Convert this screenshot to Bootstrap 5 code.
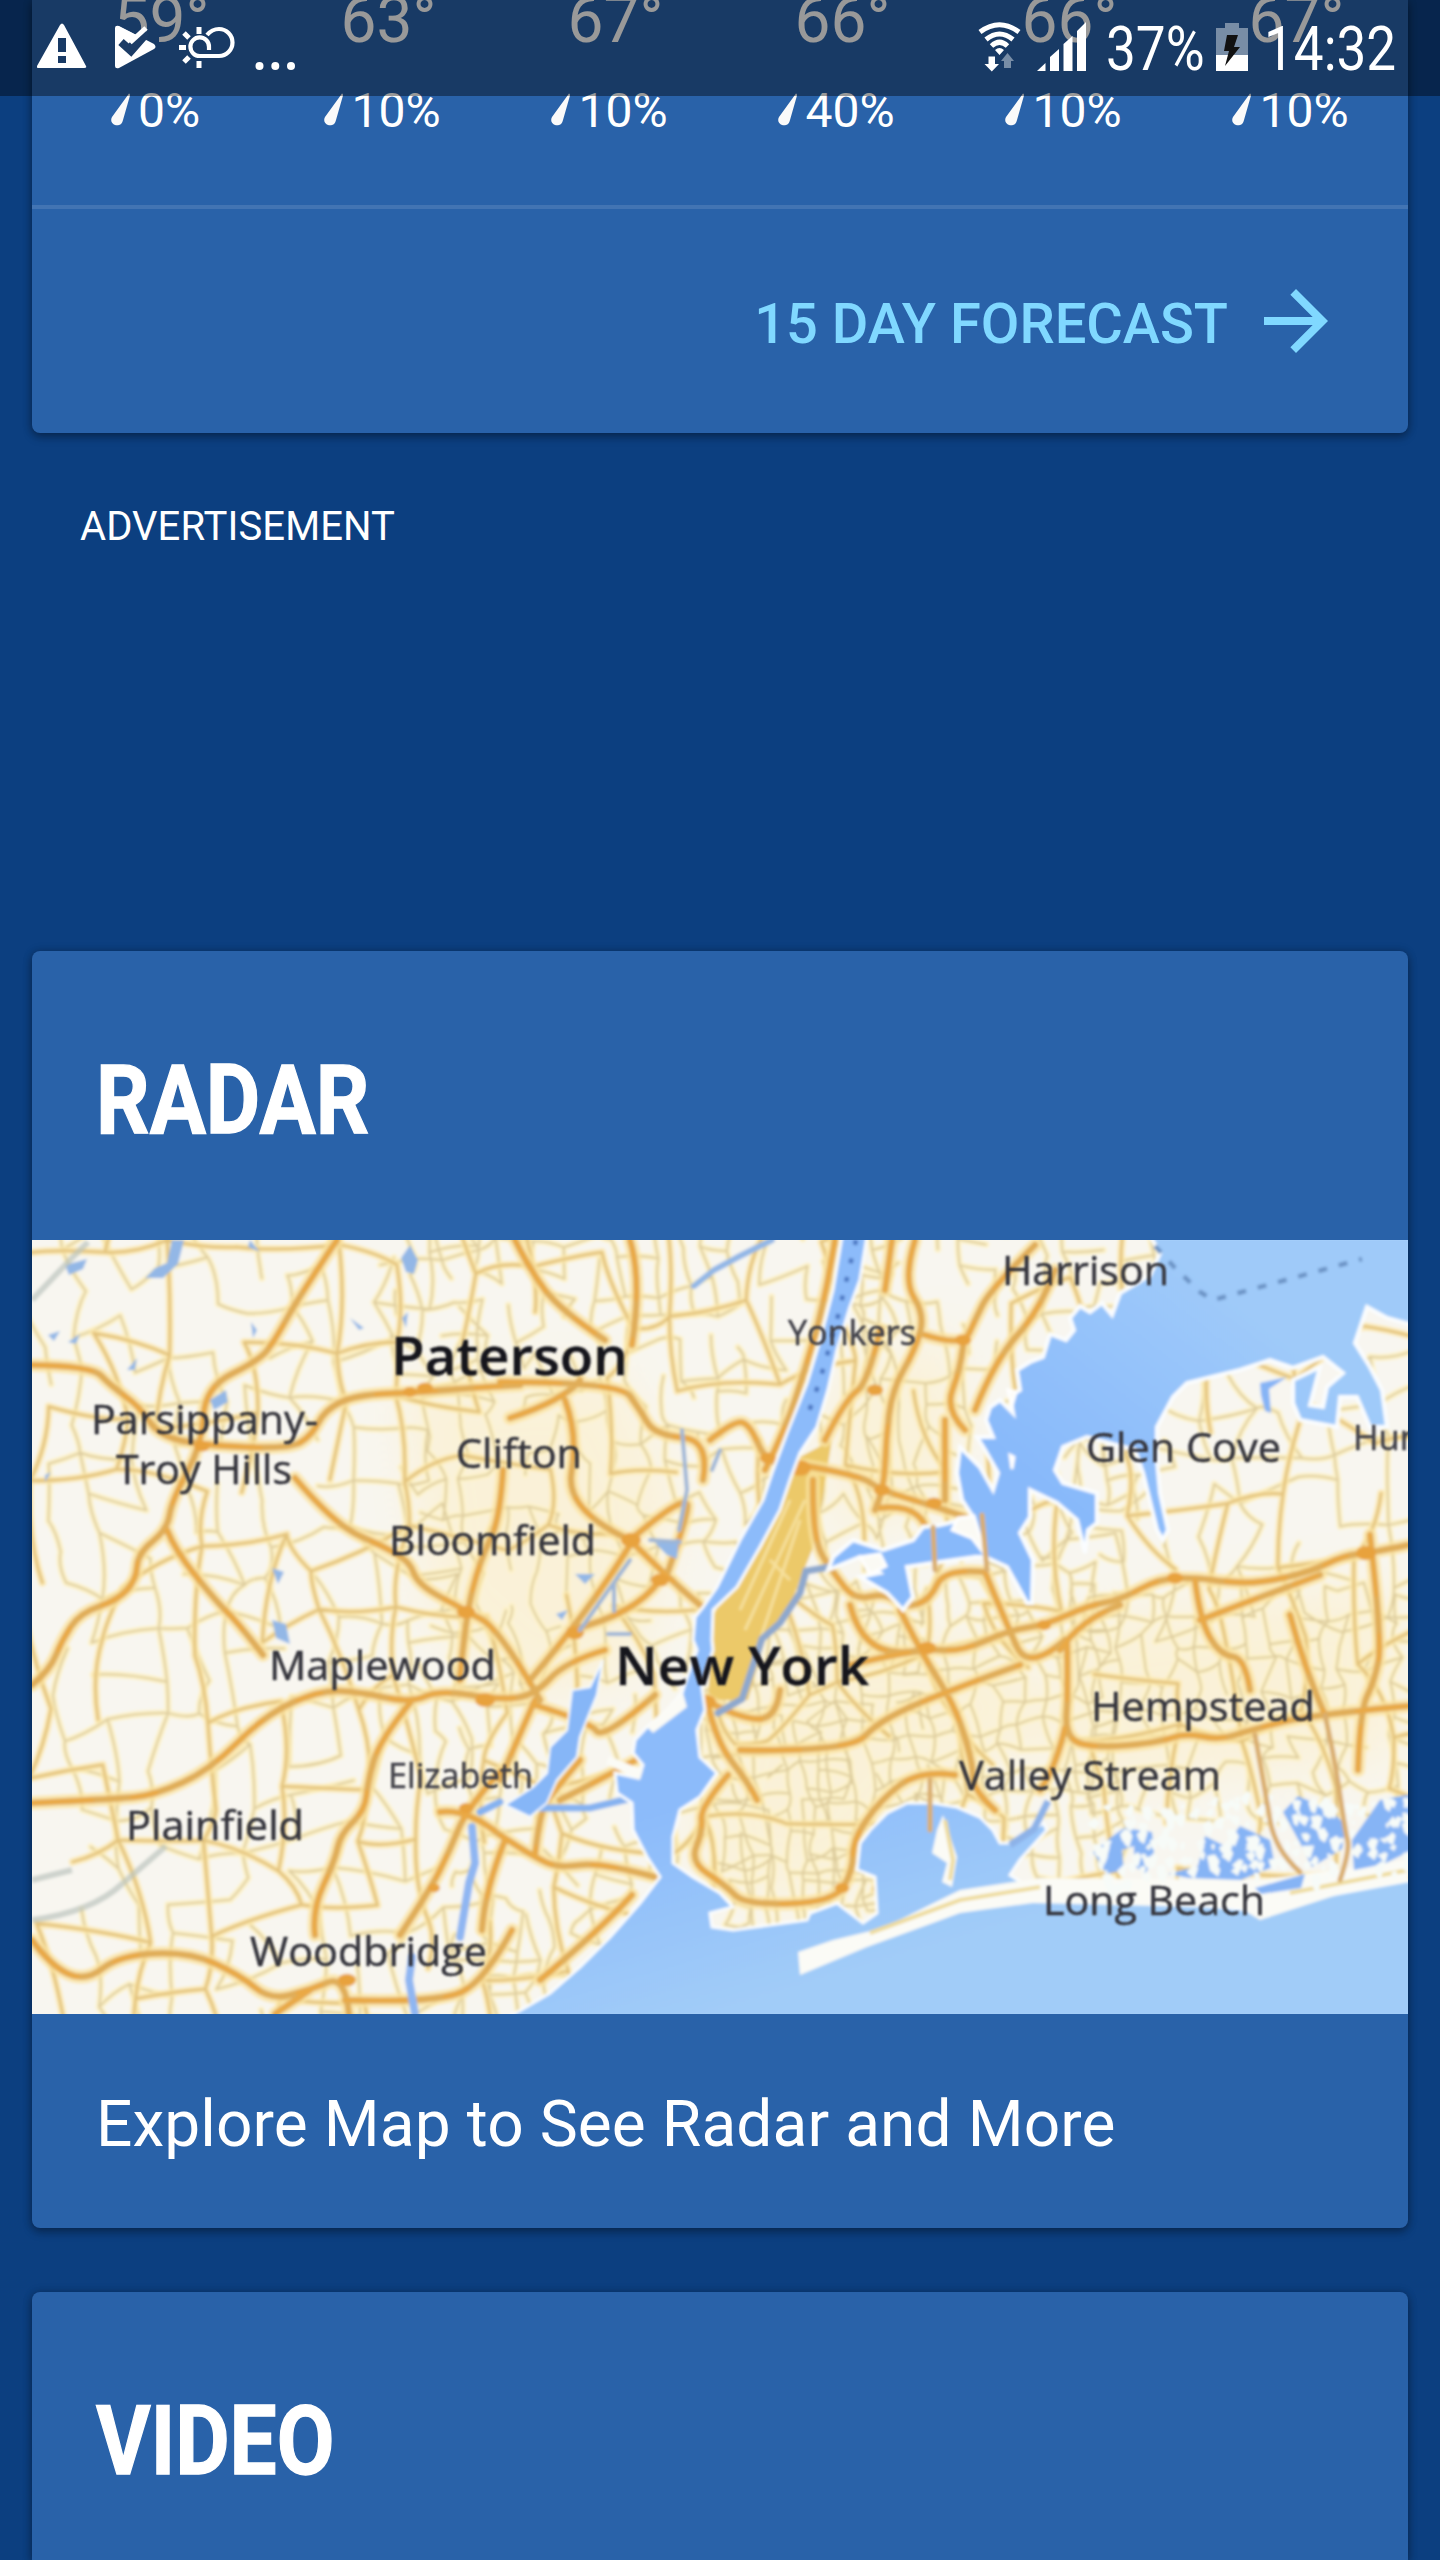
<!DOCTYPE html>
<html lang="en">
<head>
<meta charset="utf-8">
<meta name="viewport" content="width=device-width, initial-scale=1">
<title>Weather</title>
<link href="https://cdn.jsdelivr.net/npm/bootstrap@5.3.0/dist/css/bootstrap.min.css" rel="stylesheet">
<style>
  body { background: #0c3f80; color: #fff; font-family: Roboto, sans-serif; height: 2560px; overflow: hidden; }
  .panel { --bs-card-bg: #2962a9; --bs-card-color: #fff; background: #2962a9; color: #fff; border-radius: 8px; box-shadow: 0 4px 10px rgba(0,0,0,.32), 0 0 10px rgba(0,0,0,.2); }
  .screen { padding: 0 32px; }
  .statusbar { height: 96px; background: rgba(0,0,0,.4); z-index: 10; padding: 0 32px 0 37px; }
  .statusbar svg { display: block; flex: none; }
  .condensed { display: inline-block; transform-origin: 0 50%; white-space: nowrap; }
  .status-text { font-size: 61px; line-height: 64px; height: 64px; margin-top: 17px; transform: scaleX(.87); }
  .pct-box { width: 110px; margin-left: 18px; }
  .clock-box { width: 144px; margin-left: 12px; }
  .days { padding-left: 16px; height: 205px; }
  .day { width: 227px; flex: none; }
  .temp { font-size: 64px; line-height: 42px; height: 40px; }
  .precip { font-size: 48px; line-height: 56px; margin-top: 43px; padding-right: 12px; }
  .rule { height: 4px; background: #4274b3; }
  .forecast { height: 224px; padding-right: 64px; color: #80d8ff; font-size: 56px; line-height: 64px; font-weight: 500; text-decoration: none; }
  .forecast .label { padding-top: 6px; margin-right: 20px; }
  .advert { height: 518px; padding: 70px 0 0 48px; font-size: 40px; line-height: 48px; letter-spacing: .08px; }
  .panel-head { height: 289px; padding: 8px 0 0 64px; }
  .panel-head h2 { font-size: 96px; line-height: 112px; font-weight: 700; transform: scaleX(.872); -webkit-text-stroke: 1.300px #fff; }
  .explore { height: 214px; padding: 8px 0 0 64px; font-size: 64px; line-height: 76px; letter-spacing: .1px; }
  .video { height: 268px; margin-top: 64px; border-bottom-left-radius: 0; border-bottom-right-radius: 0; }
  .map { display: block; width: 1376px; height: 774px; }
  .map text { font-family: "Open Sans", "Noto Sans", sans-serif; font-size: 41px; fill: #35353c; stroke: #35353c; stroke-width: .5px; }
  .map .halo text { stroke: #fffaf0; fill: #fffaf0; stroke-opacity: .6; stroke-width: 6px; stroke-linejoin: round; }
  .map text.city { font-size: 53px; font-weight: 600; fill: #15151a; }
  .map text.town { font-size: 34px; fill: #45454d; }
</style>
<script src="https://cdn.jsdelivr.net/npm/bootstrap@5.3.0/dist/js/bootstrap.bundle.min.js"></script>
</head>
<body>
<header class="statusbar position-absolute top-0 start-0 w-100 d-flex align-items-start">
  <svg width="50" height="96" viewBox="37 0 50 96"><path fill="#fff" fill-rule="evenodd" d="M60 25q2-3 4 0l22 41q1 2-2 2H39q-3 0-2-2zM58 38v14h8V38zM58 56v7h8v-7z"/></svg>
  <svg width="92" height="96" viewBox="87 0 92 96"><path fill="#fff" d="M115 28q0-3 4-2l35 18q3 3 0 5l-35 19q-4 1-4-2z"/><path d="M121 42l10 9 14-16" fill="none" stroke="#1c3c66" stroke-width="8"/><path d="M131 47l9-10 7-5" fill="none" stroke="#1c3c66" stroke-width="8"/><path d="M130 42.500L146 28" fill="none" stroke="#fff" stroke-width="5"/><path fill="#fff" d="M119 26.500l17 8.500-5 6-7-7-5 3z"/></svg>
  <svg width="56" height="96" viewBox="179 0 56 96"><g fill="none" stroke="#fff" stroke-width="4.200"><path d="M207 35q5-6 12-6a13.500 13.500 0 0 1 0 27h-19a9.300 9.300 0 1 1 9-9v3"/><path stroke-width="5" d="M199 27v7M179 47.500h7M199 61v7M184 33l5 5M184 62l5-5"/></g></svg>
  <svg width="66" height="96" viewBox="235 0 66 96"><g fill="#fff"><circle cx="259.500" cy="66" r="4"/><circle cx="275.300" cy="66" r="4"/><circle cx="291" cy="66" r="4"/></g></svg>
  <svg class="ms-auto" width="46" height="96" viewBox="977 0 46 96"><g fill="none" stroke="#fff" stroke-width="5"><path d="M980 32Q999.500 17.500 1019 32"/><path d="M986 39.500Q999.500 28.500 1013 39.500"/><path d="M991.500 46Q999.500 38.500 1007.500 46"/></g><path fill="#fff" d="M995 50q4.500-4 9 0l-4.500 5zM988.500 56.500h6.500v7.500h4l-7.200 7.500-7.300-7.500h4z"/><path fill="#788da6" d="M1007.500 53l6.500 8h-3v7h-7v-7h-3z"/></svg>
  <svg width="65" height="96" viewBox="1023 0 65 96"><path fill="#fff" d="M1037 71l8.500-8v8zM1050 71V57l9-8v22zM1063.500 71V44l9-8v35zM1077 71V31l9-9v49z"/></svg>
  <div class="pct-box"><span class="condensed status-text">37%</span></div>
  <svg width="36" height="96" viewBox="1216 0 36 96"><path fill="#788da6" d="M1216 28h9v-5h14v5h9v27h-32z"/><path fill="#fff" d="M1216 55h32v16h-32z"/><path fill="#111" d="M1227 35h11l-4 12h6l-15 19 4-15h-5z"/></svg>
  <div class="clock-box"><span class="condensed status-text">14:32</span></div>
</header>

<main class="screen">
  <section class="card panel border-0 rounded-top-0">
    <div class="days d-flex" id="days"></div>
    <div class="rule"></div>
    <a class="forecast d-flex align-items-center justify-content-end" href="#"><span class="label">15 DAY FORECAST</span>
      <svg width="96" height="96" viewBox="0 0 24 24" fill="currentColor"><path d="M12 4l-1.410 1.410L16.170 11H4v2h12.170l-5.580 5.590L12 20l8-8z"/></svg></a>
  </section>
  <div class="advert">ADVERTISEMENT</div>
  <section class="card panel border-0">
    <div class="panel-head d-flex align-items-center"><h2 class="condensed m-0">RADAR</h2></div>
    <svg class="map" viewBox="32 1240 1376 774">
      <defs>
        <filter id="soft" x="0" y="0" width="100%" height="100%"><feGaussianBlur stdDeviation="1.500"/></filter>
        <filter id="softText" x="-5%" y="-5%" width="110%" height="110%"><feGaussianBlur stdDeviation=".9"/></filter>
        <filter id="glow" x="-20%" y="-20%" width="140%" height="140%"><feGaussianBlur stdDeviation="26"/></filter>
        <linearGradient id="sea" gradientUnits="userSpaceOnUse" x1="700" y1="1800" x2="760" y2="2000"><stop offset="0" stop-color="#8cbbfa"/><stop offset="1" stop-color="#a1ccf8"/></linearGradient>
        <linearGradient id="sound" gradientUnits="userSpaceOnUse" x1="1040" y1="1480" x2="1200" y2="1270"><stop offset="0" stop-color="#88b9fa"/><stop offset="1" stop-color="#9fcaf9"/></linearGradient>
      </defs>
      <g filter="url(#soft)">
        <rect x="20" y="1230" width="1400" height="800" fill="#f8f6f0"/>
        <g fill="#fdebb5" opacity=".4" filter="url(#glow)">
          <path d="M400 1380L620 1370 680 1500 640 1680 520 1700 430 1620zM720 1690L860 1620 1000 1640 1090 1740 950 1780 850 1900 730 1900 690 1850zM830 1380L960 1330 950 1500 830 1540zM1060 1620L1400 1580V1760L1080 1790z"/>
        </g>
        <g id="minor" fill="none" stroke-linecap="round"></g>
        <path fill="#ecc969" d="M798 1458L832 1440 822 1500 812 1550 792 1600 765 1640 748 1700 708 1700 713 1615 762 1547z"/>
        <path d="M790 1500l-50 110M805 1500l-60 130M770 1560l20 20M800 1520l-50 150" stroke="#f6e09c" stroke-width="3" fill="none"/>
        <g id="major" fill="none" stroke-linejoin="round" stroke-linecap="round"></g>
        <!-- lakes and creeks -->
        <g fill="#93b7e6">
          <path d="M172 1240h12l-6 24-15 14-18 0 10-10 12-5zM65 1265l22-6-4 10-14 6zM410 1245l8 15-4 14-8-2-5-14zM250 1240l10 12-12-5zM48 1335l12-4-6 10zM68 1342l12-8-4 10zM127 1370l10-12-2 12zM210 1400l16-10 2 12-14 8zM251 1322l6 8-4 8zM402 1318l6-6-2 16zM350 1318l14 10-5 2zM272 1568l12 4-6 12zM272 1620l14 4 4 20-14-6zM45 1475l6-3-6 10zM655 1543l24-4-2 20-10-4zM575 1574h20l-10 10zM556 1614l12-4-6 10z"/>
        </g>
        <path fill="none" stroke="#bcc4bd" stroke-width="6" opacity=".7" d="M32 1300l36-38 20-20M32 1920q60-8 90-36l44-38M32 1880l40-10"/>
        <g fill="none" stroke-linecap="round">
          <path stroke="#93b7e6" stroke-width="6" d="M694 1286l20-16 26-14 20-10 12-6"/>
          <path stroke="#9db5d6" stroke-width="4" d="M682 1430l5 60-8 40M720 1450l-8 20M630 1560l-50 70M614 1585v26M608 1634h22M650 1540l30 2"/>
          <path stroke="#8fb6f2" stroke-width="8" d="M472 1827l3 36-6 20-9 54M412 1957l-3 23 6 34"/>
          <path stroke="#86b2f0" stroke-width="7" d="M480 1812l20-10M540 1808l50 0 38-9"/>
          <path stroke="#8ea8cd" stroke-width="7" d="M830 1567l-24 4-6 22-20 30-18 16-20 60-24 14"/>
        </g>
        <!-- harbour, bays and the ocean -->
        <path fill="url(#sea)" stroke="#fafdff" stroke-width="3" d="M842 1236L833 1290 820 1340 807 1383 787 1433 772 1473 763 1500 740 1540 717 1587 703 1607 695 1617 693 1640 697 1650 685 1683 682 1693 667 1710 647 1727 635 1740 633 1753 643 1765 638 1778 615 1773 617 1793 632 1803 633 1830 647 1857 660 1877 640 1903 610 1937 580 1967 550 1993 507 2018H1412V1880L1250 1910 1033 1890 1010 1875 1020 1860 1047 1830 1043 1823 1013 1843 1000 1843 993 1830 980 1817 957 1807 933 1803 907 1803 887 1813 870 1830 860 1843 857 1870 875 1877 877 1913 863 1923 837 1903 810 1913 807 1920 733 1930 712 1927 710 1913 733 1907 720 1893 693 1877 673 1863 673 1837 680 1810 700 1797 717 1773 700 1757 697 1730 705 1710 702 1687 713 1650 712 1640 713 1610 737 1587 760 1547 780 1510 790 1480 800 1453 817 1427 828 1390 837 1350 850 1307 860 1280 867 1236z"/>
        <path fill="#86b6f7" stroke="#f6fbff" stroke-width="2" d="M572 1690L590 1687 603 1660 597 1695 588 1717 580 1737 577 1757 557 1780 547 1803 530 1817 505 1805 533 1787 547 1773 550 1747 567 1730z"/>
        <path fill="#fbfbf6" d="M609 1756l34 14-3 10-34-16zM647 1727l36-34 4 14-34 26zM798 1952L833 1940 883 1928 960 1890 1040 1878 1260 1880 1408 1860V1882L1343 1893 1260 1920 1240 1908 1033 1903 960 1913 933 1923 867 1947 800 1975zM943 1815L957 1857 952 1887 942 1882 947 1863 932 1853 937 1830z"/>
        <path fill="none" stroke="#eedb9c" stroke-width="4" d="M870 1933L960 1900 1040 1887M1290 1893L1408 1870M945 1820l8 40-3 20"/>
        <path fill="url(#sound)" stroke="#fafdff" stroke-width="4" d="M1150 1236L1160 1253 1150 1275 1120 1293 1112 1315 1102 1303 1090 1312 1080 1306 1070 1318 1074 1330 1066 1340 1050 1334 1043 1357 1030 1362 1017 1370 1020 1390 1010 1396 1013 1413 1000 1400 990 1407 986 1420 993 1437 977 1437 985 1450 998 1473 993 1490 980 1467 960 1447 957 1473 962 1500 973 1517 940 1525 923 1527 913 1540 883 1550 853 1540 833 1557 828 1570 860 1557 880 1573 860 1577 887 1593 903 1610 913 1597 907 1567 933 1563 975 1557 985 1557 1007 1567 1027 1603 1032 1603 1033 1560 1020 1533 1030 1517 1030 1490 1057 1503 1077 1520 1085 1553 1088 1530 1097 1523 1097 1493 1063 1483 1055 1470 1063 1447 1087 1437 1135 1450 1143 1473 1157 1530 1163 1540 1168 1530 1160 1493 1157 1460 1157 1427 1173 1397 1187 1383 1240 1370 1270 1360 1293 1368 1323 1357 1343 1373 1327 1387 1323 1407 1310 1405 1320 1367 1293 1380 1293 1403 1300 1420 1337 1427 1340 1397 1357 1397 1370 1427 1387 1427 1382 1390 1370 1367 1355 1343 1367 1307 1387 1318 1412 1325V1236z"/>
        <path fill="#fbfaf4" stroke="#fff" stroke-width="3" d="M958 1518l16-2 12 40-14-18-20-8zM860 1557l20-3 6 12-16 8zM1008 1390l8 2-4 14zM1010 1455l4 2-2 12z"/>
        <path fill="#86b4f5" d="M1260 1383l27-6-18 12 2 24-6-2-4-16zM1093 1852l17-14 14-10 28 4 2 20-8 22-12-8 0-20-12 4 2 20-18 4zM1168 1874l30-8 7-30 20 10 15-20 30 14 5 26-34 14-52-2zM1283 1812l15-16 32 14 16 15-4 24-30 18-12-24zM1352 1840l14-20 14-20 32-6v56l-28 14-30 6zM1255 1888l50-14-4 14-40 6z"/>
        <path d="M1010 1845l24-16 14-28" stroke="#8db2e8" stroke-width="7" fill="none"/>
        <g id="marsh" fill="#f7fbf8"></g>
        <g id="bridges" fill="none" stroke-linejoin="round" stroke-linecap="round"></g>
        <g fill="none" stroke="#6b92c4" stroke-width="4.500">
          <path stroke-dasharray="9 12" d="M1155 1246L1175 1268 1200 1292 1213 1300 1362 1259"/>
          <path stroke="#4773c0" stroke-dasharray="5 14" d="M856 1240L837 1320 820 1380 806 1420"/>
        </g>
      </g>
      <g class="halo" filter="url(#softText)" id="halos" aria-hidden="true"></g>
      <g filter="url(#softText)" id="labels"></g>
    </svg>
    <div class="explore d-flex align-items-center">Explore Map to See Radar and More</div>
  </section>
  <section class="card panel border-0 video">
    <div class="panel-head d-flex align-items-center flex-shrink-0"><h2 class="condensed m-0">VIDEO</h2></div>
  </section>
</main>
<script>
const days = [['59°','0%'],['63°','10%'],['67°','10%'],['66°','40%'],['66°','10%'],['67°','10%']];
document.getElementById('days').innerHTML = days.map(([t, p]) => `
  <div class="day text-center"><div class="temp">${t}</div>
  <div class="precip d-flex justify-content-center align-items-start"><svg width="27" height="56" viewBox="0 0 27 56"><path fill="#fafafa" d="M18 10.500q1 0 1 2L12 37c-1 5-5 6-8 5s-5-4-3-8z"/></svg><span>${p}</span></div></div>`).join('');

// Local streets: an irregular mesh with a denser spacing near the city.
let seed = 11;
const rnd = () => (seed = (seed * 16807) % 2147483647) / 2147483647;
function mesh(x0, y0, x1, y1, step, keep, skew) {
  const pts = [], cols = Math.ceil((x1 - x0) / step) + 1, rows = Math.ceil((y1 - y0) / step) + 1;
  for (let r = 0; r < rows; r++) for (let c = 0; c < cols; c++)
    pts.push([x0 + c * step + (rnd() - .5) * step * .7 + skew * r, y0 + r * step + (rnd() - .5) * step * .7 - skew * c]);
  let d = '';
  const seg = (a, b) => {
    const mx = (a[0] + b[0]) / 2 + (rnd() - .5) * step * .3, my = (a[1] + b[1]) / 2 + (rnd() - .5) * step * .3;
    d += `M${a[0].toFixed(1)} ${a[1].toFixed(1)}Q${mx.toFixed(1)} ${my.toFixed(1)} ${b[0].toFixed(1)} ${b[1].toFixed(1)}`;
  };
  for (let r = 0; r < rows; r++) for (let c = 0; c < cols; c++) {
    const i = r * cols + c;
    if (c < cols - 1 && rnd() < keep) seg(pts[i], pts[i + 1]);
    if (r < rows - 1 && rnd() < keep + .2) seg(pts[i], pts[i + cols]);
  }
  return d;
}
const local = mesh(20, 1200, 420, 2040, 44, .5, 4) + mesh(380, 1200, 860, 2030, 29, .52, 3) +
  mesh(850, 1220, 1130, 1560, 27, .5, 2) + mesh(700, 1600, 1080, 1920, 22, .72, 2) +
  mesh(1070, 1590, 1420, 1800, 25, .65, 0) + mesh(1020, 1370, 1420, 1600, 44, .6, 2);
const streets = mesh(20, 1200, 1420, 2040, 74, .5, 4);
document.getElementById('minor').innerHTML =
  `<path d="${local}" stroke="#fdf2c9" stroke-width="7"/><path d="${local}" stroke="#dccb9b" stroke-width="2"/>
   <path d="${streets}" stroke="#fce9ac" stroke-width="8" opacity=".8"/><path d="${streets}" stroke="#e3c37c" stroke-width="3"/>`;

const roads = [
 'M32 1365L92 1366 110 1385 140 1407 158 1435 200 1445 290 1449 312 1435 325 1410 355 1395 420 1392 470 1388 520 1385',
 'M337 1240L300 1295 275 1340 260 1360 205 1387 202 1445 172 1500 167 1530 138 1553 136 1580 118 1600 80 1613 62 1640 50 1670 32 1685',
 'M167 1530L175 1550 215 1600 240 1625 263 1655', 'M295 1478L335 1525 385 1547 410 1562 418 1585 465 1610 500 1630 540 1700',
 'M515 1240L530 1270 560 1310 605 1340', 'M630 1240L642 1280 632 1345',
 'M500 1382L620 1382 640 1410 655 1435 710 1440 703 1480', 'M630 1540L660 1515 685 1500 690 1510 665 1580', 'M630 1540L670 1580 700 1605', 'M660 1580L635 1615 570 1630', 'M510 1418L565 1400 580 1380', 'M565 1400L578 1435 565 1510 630 1540',
 'M503 1470L500 1520 480 1560 465 1620 460 1680', 'M630 1545L590 1610 530 1680', 'M710 1440L735 1420 750 1425 765 1460 775 1462',
 'M32 1803L115 1799 155 1795 210 1770 265 1715 320 1690 360 1692 410 1703 440 1690 500 1700 535 1695 565 1662 605 1650',
 'M410 1703L380 1740 368 1780 365 1810 340 1835 335 1860 312 1910 315 1935', 'M500 1772L467 1808 450 1850 430 1890 400 1935', 'M440 1812L467 1808 500 1835',
 'M32 1940L50 1965 85 1982 120 1955 190 1952 240 1975 270 2000 310 1990 345 1975 349 2014', 'M275 2014L310 1990', 'M345 2000L440 2003 485 1980 512 1930',
 'M500 1835L535 1858 560 1868 600 1862 655 1877', 'M505 1840L485 1890 482 1930', 'M535 1700L500 1780', 'M535 1705L590 1722 603 1740 655 1695', 'M580 1760L555 1790 540 1810 535 1855',
 'M835 1240L825 1300 805 1370 785 1430 765 1470', 'M892 1240L885 1290', 'M915 1240L903 1280 925 1315 915 1350 892 1390 886 1440 884 1490 875 1510',
 'M925 1335L963 1347 975 1320 990 1290 1035 1245', 'M965 1430L945 1410 960 1370 963 1347', 'M825 1440L845 1400 868 1383 880 1330', 'M975 1410L995 1360 1040 1310 1055 1270',
 'M800 1465L860 1475 880 1490 930 1505 975 1520', 'M880 1508L930 1502 930 1550', 'M945 1420L945 1500', 'M813 1480L812 1540 835 1575 855 1600 885 1593 905 1608 930 1600 945 1568 985 1572',
 'M850 1665L920 1648 960 1652 1010 1630 1045 1625 1090 1605 1120 1600 1160 1578 1200 1578 1225 1582 1260 1583 1310 1572 1345 1555 1370 1553 1408 1545',
 'M985 1572L1005 1620 1028 1672 1065 1640', 'M1060 1650L1080 1620 1120 1605', 'M850 1605L865 1663 920 1650', 'M900 1610L920 1650 945 1690 960 1720 973 1765 973 1790 995 1810',
 'M1195 1580L1200 1620 1220 1655 1245 1658 1250 1690', 'M1200 1620L1260 1597 1320 1575', 'M1370 1535L1382 1640 1375 1680 1360 1710 1358 1770',
 'M1290 1615L1305 1670 1325 1715', 'M1067 1640L1068 1690 1065 1740 1100 1748 1160 1742 1185 1733 1220 1740 1250 1730 1310 1715 1408 1706', 'M1065 1728L1055 1770 1040 1790',
 'M707 1700L715 1740 750 1785 757 1800', 'M705 1700L738 1718 776 1720 780 1690', 'M728 1775L700 1808 703 1830 690 1862 725 1885 745 1905 835 1902 853 1870 853 1840 880 1800 920 1770 955 1775',
 'M740 1750L850 1752 880 1720 950 1690 1020 1665', 'M632 1895L600 1930 540 1980', 'M645 1755L600 1780 560 1800'
];
const over = ['M1255 1735L1265 1790 1275 1850 1300 1872', 'M1325 1715L1335 1760 1345 1830 1350 1850 1340 1880', 'M933 1527L935 1570', 'M982 1515L987 1570', 'M930 1780L930 1830'];
// Rounds the corners of a polyline by curving between segment midpoints.
const smooth = p => {
  const n = p.match(/[\d.]+/g).map(Number), q = [];
  for (let i = 0; i < n.length; i += 2) q.push([n[i], n[i + 1]]);
  let d = `M${q[0]}`;
  for (let i = 1; i < q.length - 1; i++) {
    const e = i === q.length - 2 ? q[i + 1] : [(q[i][0] + q[i + 1][0]) / 2, (q[i][1] + q[i + 1][1]) / 2];
    d += `Q${q[i]} ${e}`;
  }
  return q.length === 2 ? d + `L${q[1]}` : d;
};
const d = roads.map(smooth).join('');
document.getElementById('major').innerHTML =
  `<path d="${d}" stroke="#fbe3a0" stroke-width="14" stroke-opacity=".75"/><path d="${d}" stroke="#e0ad58" stroke-width="6.500"/><path d="${d}" stroke="#eaa945" stroke-width="4" stroke-dasharray="60 40 25 70"/>` +
  [[410,1392,7],[425,1388,8],[202,1446,8],[466,1612,9],[631,1540,10],[660,1580,9],[800,1468,11],[768,1458,8],[485,1700,10],[575,1633,9],[1366,1553,10],[1175,1578,8],[927,1648,9],[347,1980,9],[434,1888,6],[466,1808,7],[706,1702,10],[875,1390,8],[963,1340,8],[842,1888,7],[1044,1625,7],[882,1490,8],[934,1503,8]]
  .map(([x, y, r]) => `<ellipse cx="${x}" cy="${y}" rx="${r}" ry="${r * .7}" fill="#e8a23c"/>`).join('');
document.getElementById('bridges').innerHTML = `<path d="${over.map(smooth).join('')}" stroke="#d9ad6e" stroke-width="5"/>`;

let m = '';
for (let i = 0; i < 190; i++) {
  const x = 1085 + rnd() * 320, y = 1798 + rnd() * 80 + (x < 1160 ? 8 : 0), s = 2 + rnd() * 6;
  m += `M${x} ${y}l${s} ${-s * rnd() * 1.5} ${s * .6} ${s * rnd()} ${-s * .5} ${s * (1 + rnd())} ${-s * .7} ${-s * .5}z`;
}
document.getElementById('marsh').innerHTML = `<path d="${m}"/>`;

// label, left, right, baseline, class
const labels = [['Paterson',394,625,1375,'city'],['Parsippany-',94,315,1434],['Troy Hills',116,289,1484],['Clifton',459,579,1468],['Bloomfield',392,593,1555],
 ['Yonkers',788,913,1345,'town'],['Harrison',1005,1166,1285],['Glen Cove',1089,1278,1462],['Hun',1356,1418,1450,'town'],['Maplewood',272,493,1680],
 ['Elizabeth',391,530,1788,'town'],['Plainfield',129,301,1840],['Woodbridge',250,484,1966],['New York',618,866,1685,'city'],['Hempstead',1094,1312,1721],
 ['Valley Stream',959,1218,1790],['Long Beach',1046,1262,1915]];
const labelSvg = labels.map(([t, a, b, y, c]) => {
  const l = /^[TVYW]/.test(t) ? 0 : 3;
  return `<text class="${c || ''}" x="${a - l}" y="${y}" textLength="${b - a + l + 3}" lengthAdjust="spacingAndGlyphs">${t}</text>`;
}).join('');
document.getElementById('labels').innerHTML = labelSvg;
</script>
</body>
</html>
